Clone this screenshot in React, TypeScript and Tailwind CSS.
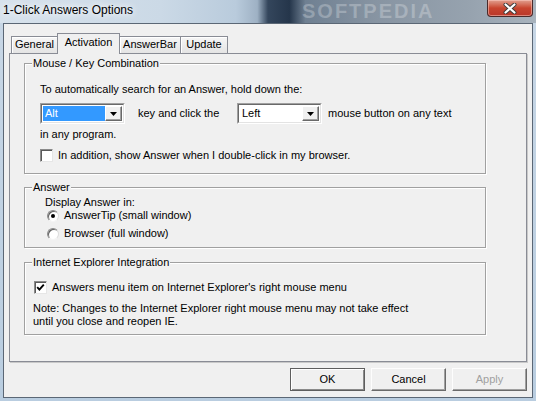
import React from 'react';

const Arrow = () => (
  <svg width="7" height="4" viewBox="0 0 7 4">
    <path d="M0 0h7L3.5 4z" fill="#000" />
  </svg>
);

const Combo = ({ value, selected }: { value: string; selected?: boolean }) => (
  <div className="flex h-[21px] w-[85px] border border-[#a0a0a0] border-r-white border-b-white">
    <div className="flex flex-1 border border-[#696969] border-r-[#e3e3e3] border-b-[#e3e3e3] bg-white p-px">
      <div
        className={
          selected
            ? 'flex-1 bg-[#3399ff] pl-[2px] text-white leading-[15px]'
            : 'flex-1 pl-[2px] text-black leading-[15px]'
        }
      >
        {value}
      </div>
      <div className="flex w-[17px] items-center justify-center border border-white border-r-[#696969] border-b-[#696969] bg-[#f0f0f0] shadow-[inset_-1px_-1px_0_#a0a0a0]">
        <Arrow />
      </div>
    </div>
  </div>
);

const CheckBox = ({ checked }: { checked?: boolean }) => (
  <div className="flex h-[13px] w-[13px] shrink-0 items-center justify-center border border-[#8a8a8a] border-r-[#e6e6e6] border-b-[#e6e6e6] bg-white shadow-[inset_1px_1px_0_#5a5a5a]">
    {checked && (
      <svg width="9" height="9" viewBox="0 0 9 9">
        <path d="M1.2 4.2 L3.4 6.6 L7.8 1.6" fill="none" stroke="#000" strokeWidth="1.9" />
      </svg>
    )}
  </div>
);

const Radio = ({ checked }: { checked?: boolean }) => (
  <div className="flex h-[12px] w-[12px] shrink-0 items-center justify-center rounded-full border border-[#8a8a8a] border-r-[#dcdcdc] border-b-[#f4f4f4] bg-white shadow-[inset_1px_1px_0_#5f5f5f]">
    {checked && <div className="h-[4px] w-[4px] rounded-full bg-black" />}
  </div>
);

const Group = ({ title, className, children }: { title: string; className: string; children: React.ReactNode }) => (
  <div className={`relative ml-[14px] w-[462px] border border-[#a0a0a0] shadow-[inset_1px_1px_0_#fff,1px_1px_0_#fff] ${className}`}>
    <span className="absolute -top-[7px] left-[7px] bg-[#f0f0f0] px-px leading-[13px]">{title}</span>
    {children}
  </div>
);

const Tab = ({ label, active, w, first }: { label: string; active?: boolean; w: string; first?: boolean }) => (
  <div
    className={
      (active
        ? 'relative z-10 -mb-px h-[21px] bg-[#f0f0f0] pt-[2px] '
        : 'h-[17px] bg-gradient-to-b from-[#f6f6f6] to-[#e4e4e4] pt-[1px] shadow-[inset_1px_1px_0_#fff] ') +
      (first ? '' : '-ml-px ') +
      `${w} border border-b-0 border-[#898c95] text-center leading-[13px]`
    }
  >
    {label}
  </div>
);

const Button = ({ label, def, disabled }: { label: string; def?: boolean; disabled?: boolean }) => (
  <div
    className={
      (def
        ? 'border-[#5e5e5e] shadow-[inset_1px_1px_0_#fff,inset_-1px_-1px_0_#8a8a8a] '
        : 'border-[#fdfdfd] border-r-[#6a6a6a] border-b-[#6a6a6a] shadow-[inset_-1px_-1px_0_#a0a0a0] ') +
      (disabled ? 'text-[#a0a0a0] ' : 'text-black ') +
      'flex h-[23px] w-[75px] items-center justify-center border bg-[#f0f0f0]'
    }
  >
    {label}
  </div>
);

export default function App() {
  return (
    <div className="flex h-[401px] w-[536px] flex-col overflow-hidden bg-gradient-to-b from-[#c8d7e6] to-[#b9cde0] font-['Liberation_Sans',Arial,sans-serif] text-[11px] text-black">
      {/* Title bar */}
      <div className="relative flex h-[23px] shrink-0 items-start overflow-hidden bg-[linear-gradient(90deg,#d7e2ec_0%,#cbd9e6_30%,#b9cbdc_44%,#9eb1c4_48%,#34465c_50%,#25364b_54%,#6f8092_57%,#8794a2_70%,#97a3af_88%,#a8b3bd_100%)]">
        <span className="absolute left-[302px] top-[1px] text-[20px] font-bold leading-[20px] tracking-[2px] text-white/25">SOFTPEDIA</span>
        <span className="relative ml-[3px] mt-[3px] text-[12px] leading-[15px] [text-shadow:0_0_6px_#fff,0_0_10px_#fff]">
          1-Click Answers Options
        </span>
        <div className="relative ml-auto mr-[3px] flex h-[17px] w-[46px] items-center justify-center rounded-b-[4px] border border-t-0 border-[#4a2a2a] bg-gradient-to-b from-[#e0a090] via-[#c8452f] to-[#b8372a] shadow-[inset_0_0_0_1px_rgba(255,210,200,0.5)]">
          <svg width="14" height="11" viewBox="0 0 14 11">
            <path d="M2.5 1.5 L11.5 9.5 M11.5 1.5 L2.5 9.5" stroke="#3a3a3a" strokeWidth="4" strokeLinecap="round" />
            <path d="M2.5 1.5 L11.5 9.5 M11.5 1.5 L2.5 9.5" stroke="#fff" strokeWidth="2.2" strokeLinecap="round" />
          </svg>
        </div>
      </div>

      {/* Client area */}
      <div className="mx-[3px] mb-[3px] flex flex-1 flex-col border border-[#5b6775] bg-[#f0f0f0]">
        <div className="ml-[7px] mt-[9px] flex h-[20px] items-end">
          <Tab label="General" w="w-[47px]" first />
          <Tab label="Activation" w="w-[63px]" active />
          <Tab label="AnswerBar" w="w-[62px]" />
          <Tab label="Update" w="w-[48px]" />
        </div>

        <div className="mx-[5px] flex h-[309px] flex-col border border-[#898c95] bg-[#f0f0f0] shadow-[1px_1px_0_#c9c9c9]">
          <Group title="Mouse / Key Combination" className="mt-[9px] h-[111px] pl-[15px] pt-[19px]">
            <div className="leading-[13px]">To automatically search for an Answer, hold down the:</div>
            <div className="mt-[7px] flex items-center">
              <Combo value="Alt" selected />
              <span className="ml-[13px] w-[99px]">key and click the</span>
              <Combo value="Left" />
              <span className="ml-[6px]">mouse button on any text</span>
            </div>
            <div className="mt-[4px] leading-[13px]">in any program.</div>
            <div className="mt-[8px] flex items-center gap-[5px] leading-[13px]">
              <CheckBox />
              <span>In addition, show Answer when I double-click in my browser.</span>
            </div>
          </Group>

          <Group title="Answer" className="mt-[13px] h-[61px] pl-[20px] pt-[8px]">
            <div className="leading-[13px]">Display Answer in:</div>
            <div className="ml-[2px] flex items-center gap-[5px] leading-[13px]">
              <Radio checked />
              <span>AnswerTip (small window)</span>
            </div>
            <div className="ml-[2px] mt-[5px] flex items-center gap-[5px] leading-[13px]">
              <Radio />
              <span>Browser (full window)</span>
            </div>
          </Group>

          <Group title="Internet Explorer Integration" className="mt-[14px] h-[73px] pl-[8px] pt-[18px]">
            <div className="ml-px flex items-center gap-[5px] leading-[13px]">
              <CheckBox checked />
              <span>Answers menu item on Internet Explorer's right mouse menu</span>
            </div>
            <div className="mt-[8px] leading-[13px]">
              Note: Changes to the Internet Explorer right mouse menu may not take effect
              <br />
              until you close and reopen IE.
            </div>
          </Group>
        </div>

        <div className="mr-[5px] mt-[6px] flex justify-end gap-[6px]">
          <Button label="OK" def />
          <Button label="Cancel" />
          <Button label="Apply" disabled />
        </div>
      </div>
    </div>
  );
}
